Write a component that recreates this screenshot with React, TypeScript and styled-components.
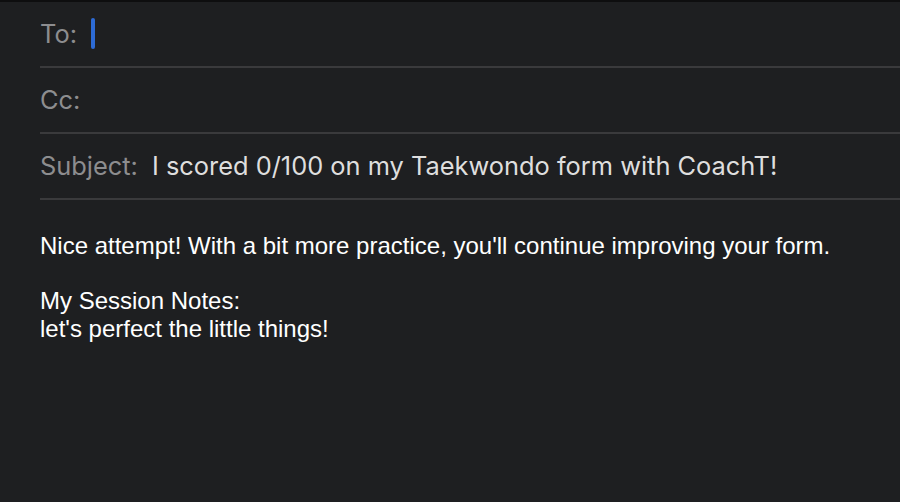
import React from "react";
import styled, { createGlobalStyle } from "styled-components";

const Global = createGlobalStyle`
  html, body { margin: 0; padding: 0; background: #1e1f21; }
  body { width: 900px; height: 502px; overflow: hidden; }
`;

const Window = styled.div`
  width: 900px;
  height: 502px;
  background: #1e1f21;
  border-top: 2px solid #0e0e0f;
  box-sizing: border-box;
  display: flex;
  flex-direction: column;
`;

const Header = styled.div`
  display: flex;
  flex-direction: column;
  padding-left: 40px;
`;

const Row = styled.div`
  display: flex;
  align-items: center;
  border-bottom: 2px solid #3a3a3c;
  font-family: Inter, "Noto Sans", sans-serif;
  font-size: 25.4px;
  padding-bottom: 2px;
  box-sizing: border-box;
  height: 66px;
`;

const Label = styled.span`
  color: #8d8d8f;
  margin-right: 14px;
`;

const Value = styled.span`
  color: #dedede;
`;

const Caret = styled.span`
  display: inline-block;
  width: 4px;
  height: 31px;
  border-radius: 2px;
  background: #2d6bd5;
`;

const Body = styled.div`
  padding: 32px 40px 0 40px;
  font-family: "Liberation Sans", Arial, sans-serif;
  font-size: 24px;
  line-height: 27.6px;
  color: #ffffff;
`;

const Para = styled.p<{ $gap?: number }>`
  margin: 0 0 ${(p) => p.$gap ?? 0}px 0;
`;

export default function App() {
  return (
    <>
      <Global />
      <Window>
        <Header>
          <Row>
            <Label>To:</Label>
            <Caret />
          </Row>
          <Row>
            <Label>Cc:</Label>
          </Row>
          <Row>
            <Label>Subject:</Label>
            <Value>I scored 0/100 on my Taekwondo form with CoachT!</Value>
          </Row>
        </Header>
        <Body>
          <Para $gap={27.6}>
            Nice attempt! With a bit more practice, you'll continue improving your form.
          </Para>
          <Para>My Session Notes:</Para>
          <Para>let's perfect the little things!</Para>
        </Body>
      </Window>
    </>
  );
}
